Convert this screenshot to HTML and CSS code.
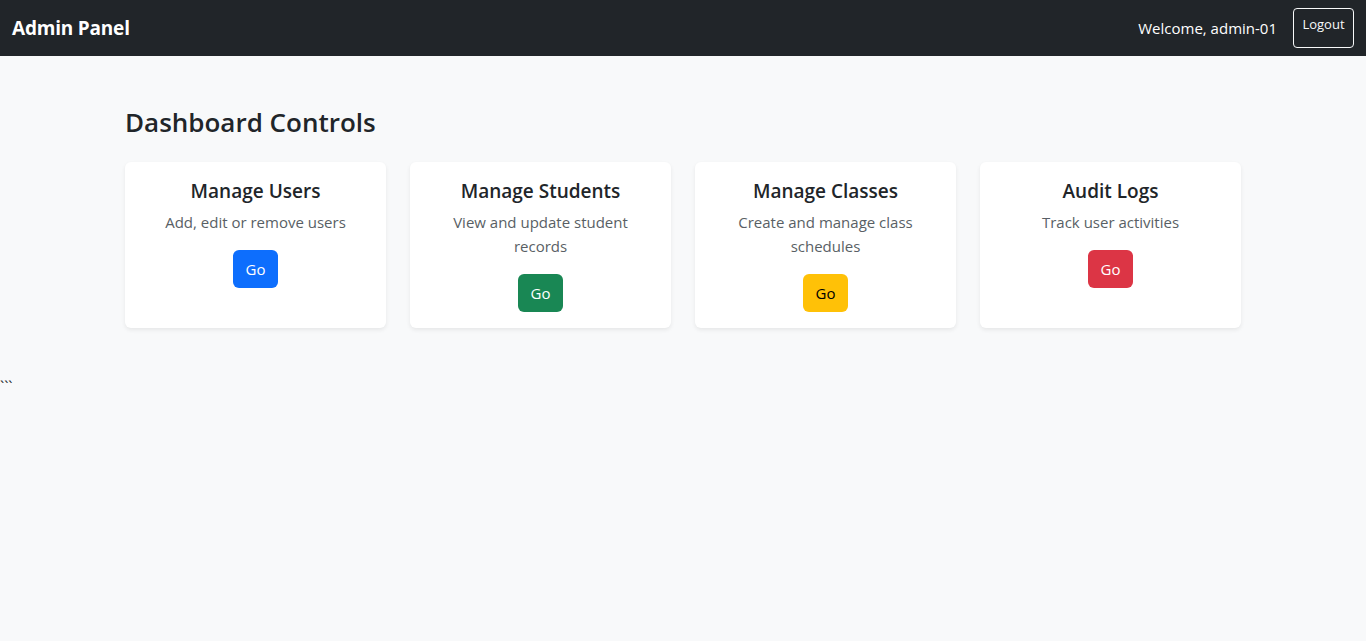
FILE: index.html
```html
<!DOCTYPE html>
<html lang="en">
<head>
<meta charset="utf-8">
<title>Admin Panel</title>
<link rel="stylesheet" href="styles.css">
</head>
<body>
<nav class="navbar">
  <span class="brand">Admin Panel</span>
  <div class="nav-right">
    <span class="welcome">Welcome, admin-01</span>
    <button class="btn-logout">Logout</button>
  </div>
</nav>
<main class="container">
  <h3 class="page-title">Dashboard Controls</h3>
  <div class="cards">
    <div class="card">
      <h5 class="card-title">Manage Users</h5>
      <p class="card-text">Add, edit or remove users</p>
      <button class="btn btn-primary">Go</button>
    </div>
    <div class="card">
      <h5 class="card-title">Manage Students</h5>
      <p class="card-text">View and update student records</p>
      <button class="btn btn-success">Go</button>
    </div>
    <div class="card">
      <h5 class="card-title">Manage Classes</h5>
      <p class="card-text">Create and manage class schedules</p>
      <button class="btn btn-warning">Go</button>
    </div>
    <div class="card">
      <h5 class="card-title">Audit Logs</h5>
      <p class="card-text">Track user activities</p>
      <button class="btn btn-danger">Go</button>
    </div>
  </div>
</main>
<div class="stray">```</div>
</body>
</html>
```
FILE: styles.css
```css
* { box-sizing: border-box; }
body {
  margin: 0;
  background: #f8f9fa;
  color: #212529;
  font-family: "Open Sans", "Noto Sans", sans-serif;
  font-size: 15px;
  line-height: 1.5;
}
.navbar {
  background: #212529;
  height: 56px;
  padding: 8px 12px;
  display: flex;
  align-items: stretch;
  justify-content: space-between;
}
.brand {
  color: #fff;
  font-weight: 700;
  font-size: 19px;
  align-self: center;
  letter-spacing: -0.2px;
}
.nav-right {
  display: flex;
  align-items: stretch;
}
.welcome {
  color: #fff;
  align-self: center;
  margin-right: 16px;
  font-size: 15px;
}
.btn-logout {
  background: transparent;
  color: #f8f9fa;
  border: 1px solid #f8f9fa;
  border-radius: 4px;
  font-family: inherit;
  font-size: 13px;
  line-height: 1.5;
  padding: 6px 8px 4px;
  display: flex;
  align-items: flex-start;
  width: 61px;
  justify-content: center;
}
.container {
  width: 1140px;
  margin: 50px auto 0;
  padding: 0 12px;
}
.page-title {
  margin: 0 0 24px;
  font-size: 26px;
  font-weight: 600;
  line-height: 32px;
}
.cards {
  display: grid;
  grid-template-columns: repeat(4, 1fr);
  gap: 24px;
}
.card {
  background: #fff;
  border-radius: 6px;
  box-shadow: 0 2px 4px rgba(0,0,0,0.075);
  padding: 18px 16px 16px;
  text-align: center;
  display: flex;
  flex-direction: column;
  align-items: center;
}
.card-title {
  margin: 0 0 6px;
  font-size: 19px;
  font-weight: 600;
  line-height: 1.25;
}
.card-text {
  margin: 0 0 16px;
  color: #595f65;
  font-size: 15px;
  line-height: 24px;
  padding: 0 14px;
}
.btn {
  border: 1px solid transparent;
  border-radius: 6px;
  font-family: inherit;
  font-size: 15px;
  line-height: 24px;
  padding: 6px 12px;
  color: #fff;
}
.btn-primary { background: #0d6efd; }
.btn-success { background: #198754; }
.btn-warning { background: #ffc107; color: #000; }
.btn-danger { background: #dc3545; }
.stray {
  margin-top: 48px;
  font-size: 15px;
  line-height: 20px;
  padding-left: 0;
}
```
